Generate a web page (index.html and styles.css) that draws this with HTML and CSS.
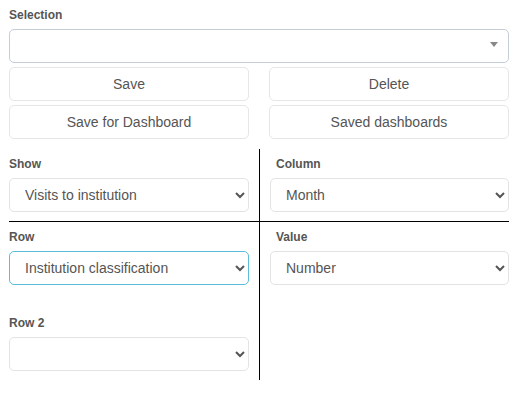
FILE: index.html
```html
<!DOCTYPE html>
<html lang="en">
<head>
    <meta charset="UTF-8">
    <meta name="viewport" content="width=device-width, initial-scale=1.0">
    <title>Report Settings</title>
    <link rel="stylesheet" href="styles.css">
</head>
<body>

    <div class="page">
        <!-- Saved selection picker -->
        <label class="field-label">Selection</label>
        <div class="picker">
            <span class="picker-arrow"></span>
        </div>

        <div class="button-grid">
            <button class="btn">Save</button>
            <button class="btn">Delete</button>
            <button class="btn">Save for Dashboard</button>
            <button class="btn">Saved dashboards</button>
        </div>

        <!-- Pivot settings -->
        <div class="pivot">
            <div class="cell cell-left cell-top">
                <label class="field-label">Show</label>
                <select class="form-select">
                    <option>Visits to institution</option>
                </select>
            </div>
            <div class="cell cell-right cell-top">
                <label class="field-label">Column</label>
                <select class="form-select">
                    <option>Month</option>
                </select>
            </div>
            <div class="cell cell-left">
                <label class="field-label">Row</label>
                <select class="form-select focused">
                    <option>Institution classification</option>
                </select>
                <label class="field-label second">Row 2</label>
                <select class="form-select">
                    <option></option>
                </select>
            </div>
            <div class="cell cell-right">
                <label class="field-label">Value</label>
                <select class="form-select">
                    <option>Number</option>
                </select>
            </div>
        </div>
    </div>

</body>
</html>
```

FILE: styles.css
```css
/* Page */
body {
    margin: 0;
    padding: 0;
    background-color: #fff;
    font-family: "Liberation Sans", Arial, sans-serif;
    font-size: 14px;
    color: #555;
}

.page {
    margin: 0 11px 0 9px;
    padding-top: 7px;
}

/* Labels */
.field-label {
    display: block;
    font-size: 12px;
    font-weight: bold;
    line-height: 17px;
    color: #555;
    margin-bottom: 5px;
}

.field-label.second {
    margin-top: 30px;
}

/* Selection picker */
.picker {
    position: relative;
    height: 34px;
    box-sizing: border-box;
    border: 1px solid #c5cdd8;
    border-radius: 5px;
    background-color: #fff;
}

.picker-arrow {
    position: absolute;
    right: 10px;
    top: 12px;
    width: 0;
    height: 0;
    border-left: 4px solid transparent;
    border-right: 4px solid transparent;
    border-top: 5px solid #888;
}

/* Buttons */
.button-grid {
    display: grid;
    grid-template-columns: 1fr 1fr;
    column-gap: 20px;
    row-gap: 4px;
    margin-top: 4px;
}

.btn {
    height: 34px;
    padding: 0 12px;
    font-family: inherit;
    font-size: 14px;
    color: #555;
    background-color: #fff;
    border: 1px solid #e6e6e6;
    border-radius: 5px;
    cursor: pointer;
}

/* Pivot grid */
.pivot {
    display: grid;
    grid-template-columns: 251px 1fr;
    margin-top: 10px;
}

.cell {
    box-sizing: border-box;
    padding-top: 7px;
    padding-bottom: 9px;
}

.cell-left {
    border-right: 1px solid #000;
    padding-right: 10px;
}

.cell-right {
    padding-left: 10px;
}

.cell-right .field-label {
    padding-left: 6px;
}

.cell-top {
    border-bottom: 1px solid #000;
}

.form-select {
    display: block;
    width: 100%;
    height: 34px;
    box-sizing: border-box;
    padding: 0 8px 0 11px;
    font-family: inherit;
    font-size: 14px;
    color: #555;
    background-color: #fff;
    border: 1px solid #e3e3e3;
    border-radius: 5px;
}

.form-select.focused {
    border-color: #5bbcdc;
}
```
